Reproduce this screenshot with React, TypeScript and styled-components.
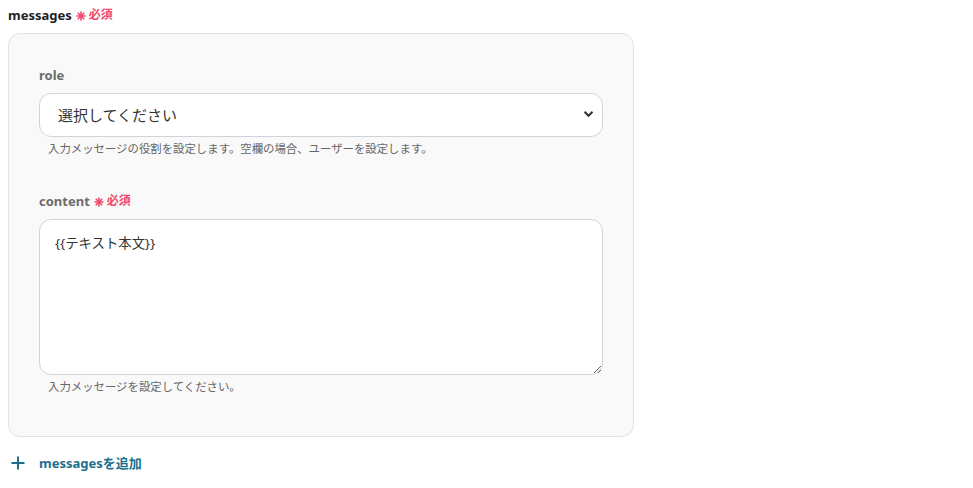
import React from "react";
import styled, { createGlobalStyle } from "styled-components";

const Global = createGlobalStyle`
  body {
    margin: 0;
    background: #ffffff;
    font-family: "Noto Sans", "Noto Sans CJK JP", sans-serif;
  }
`;

const Page = styled.div`
  padding: 6px 8px 0 8px;
  width: 626px;
`;

const FieldTitle = styled.div<{ $tone?: "dark" | "muted" }>`
  display: flex;
  align-items: center;
  gap: 4px;
  font-size: 13px;
  font-weight: 700;
  line-height: 18px;
  color: ${(p) => (p.$tone === "muted" ? "#6b6b6b" : "#222222")};
`;

const Required = styled.span`
  display: inline-flex;
  align-items: center;
  gap: 3px;
  color: #f0476a;
  font-size: 12px;
  font-weight: 700;
`;

const Star = styled.svg`
  display: block;
  margin-top: 2px;
`;

const Panel = styled.div`
  margin-top: 9px;
  background: #f9f9f9;
  border: 1px solid #e3e3e3;
  border-radius: 12px;
  padding: 32px 30px 41px 30px;
  display: flex;
  flex-direction: column;
  gap: 35px;
`;

const Field = styled.div`
  display: flex;
  flex-direction: column;
`;

const Control = styled.div`
  margin-top: 9px;
  position: relative;
`;

const SelectBox = styled.select`
  width: 100%;
  height: 44px;
  border: 1px solid #cfd4dc;
  border-radius: 12px;
  background: #ffffff;
  padding: 0 36px 0 18px;
  font-family: inherit;
  font-size: 15px;
  color: #333333;
  appearance: none;
  outline: none;
`;

const Chevron = styled.svg`
  position: absolute;
  right: 9px;
  top: 17px;
  pointer-events: none;
`;

const TextArea = styled.textarea`
  display: block;
  width: 100%;
  height: 156px;
  box-sizing: border-box;
  border: 1px solid #cfd4dc;
  border-radius: 12px;
  background: #ffffff;
  padding: 12px 15px;
  font-family: inherit;
  font-size: 13.4px;
  color: #333333;
  outline: none;
  resize: vertical;
`;

const Help = styled.div`
  margin-top: 4px;
  padding-left: 9px;
  font-size: 11.4px;
  line-height: 16px;
  color: #666666;
`;

const AddButton = styled.button`
  margin-top: 16px;
  display: flex;
  align-items: center;
  gap: 14px;
  border: none;
  background: none;
  padding: 0 0 0 3px;
  font-family: inherit;
  font-size: 13px;
  font-weight: 700;
  color: #1b6f8c;
  cursor: pointer;
`;

function RequiredMark() {
  return (
    <Required>
      <Star width="10" height="10" viewBox="0 0 10 10">
        <g stroke="#f0476a" strokeWidth="1.6" strokeLinecap="round">
          <path d="M5 1 V9" />
          <path d="M1 5 H9" />
          <path d="M2.2 2.2 L7.8 7.8" />
          <path d="M7.8 2.2 L2.2 7.8" />
        </g>
      </Star>
      必須
    </Required>
  );
}

export default function App() {
  return (
    <>
      <Global />
      <Page>
        <FieldTitle>
          messages
          <RequiredMark />
        </FieldTitle>
        <Panel>
          <Field>
            <FieldTitle $tone="muted">role</FieldTitle>
            <Control>
              <SelectBox defaultValue="">
                <option value="">選択してください</option>
                <option value="user">user</option>
                <option value="assistant">assistant</option>
                <option value="system">system</option>
              </SelectBox>
              <Chevron width="11" height="8" viewBox="0 0 11 8">
                <path d="M1.5 1.8 L5.5 5.8 L9.5 1.8" fill="none" stroke="#333" strokeWidth="2" />
              </Chevron>
            </Control>
            <Help>入力メッセージの役割を設定します。空欄の場合、ユーザーを設定します。</Help>
          </Field>
          <Field>
            <FieldTitle $tone="muted">
              content
              <RequiredMark />
            </FieldTitle>
            <Control>
              <TextArea defaultValue="{{テキスト本文}}" />
            </Control>
            <Help>入力メッセージを設定してください。</Help>
          </Field>
        </Panel>
        <AddButton>
          <svg width="14" height="14" viewBox="0 0 14 14">
            <path d="M7 0.5 V13.5 M0.5 7 H13.5" stroke="#1b6f8c" strokeWidth="2" />
          </svg>
          messagesを追加
        </AddButton>
      </Page>
    </>
  );
}
